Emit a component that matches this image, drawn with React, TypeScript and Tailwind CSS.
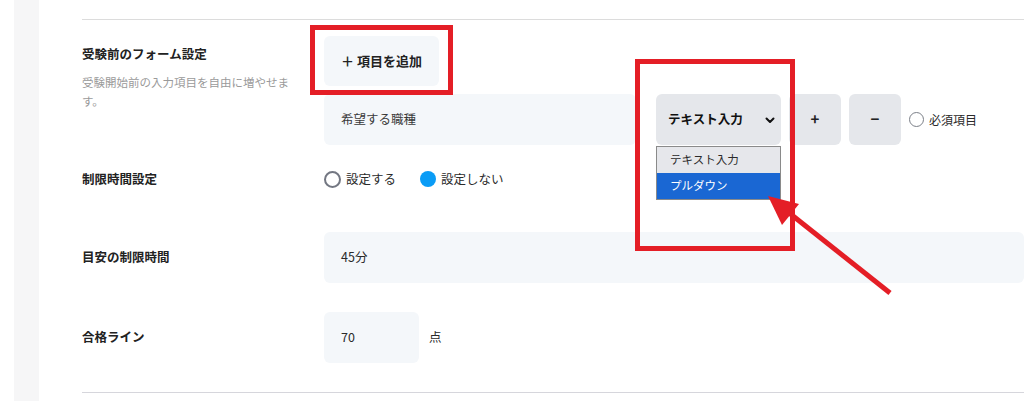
import React from "react";

export default function App() {
  const font = { fontFamily: '"Noto Sans CJK JP", "Noto Sans", sans-serif' };
  return (
    <div className="relative w-[1024px] h-[401px] bg-white overflow-hidden text-[#222]" style={font}>
      <div className="flex h-full">
        <div className="w-[14px] shrink-0" />
        <div className="w-[25px] shrink-0 bg-[#f6f6f7]" />
        <div className="flex-1 pl-[43px] pt-[19px]">
          <div className="h-px bg-[#dcdcdc]" />

          {/* Row 1 */}
          <div className="flex">
            <div className="w-[242px] shrink-0 pt-[24px]">
              <div className="text-[12.5px] font-bold leading-[19px]">受験前のフォーム設定</div>
              <div className="mt-[10px] text-[11.5px] leading-[19px] text-[#9a9a9a] w-[215px]">
                受験開始前の入力項目を自由に増やせます。
              </div>
            </div>
            <div className="pt-[16px]">
              <div className="w-[115px] h-[50px] rounded-md bg-[#f4f7fa] flex items-center justify-center text-[13px] font-bold text-[#222]">
                ＋ 項目を追加
              </div>
              <div className="mt-[8px] flex items-center">
                <div className="w-[312px] h-[51px] rounded-md bg-[#f4f7fa] flex items-center pl-[17px] text-[12.5px] text-[#3a3a3a]">
                  希望する職種
                </div>
                <div className="relative ml-[20px] w-[125px] h-[51px] rounded-md bg-[#e5e7eb] flex items-center justify-between pl-[12px] pr-[4px] text-[12.5px] font-bold text-[#111]">
                  <span>テキスト入力</span>
                  <svg width="12" height="12" viewBox="0 0 12 12" className="mr-[1px]">
                    <path d="M2.5 4.5 L6 8 L9.5 4.5" fill="none" stroke="#111" strokeWidth="2" strokeLinecap="round" strokeLinejoin="round" />
                  </svg>
                  <div className="absolute left-0 top-[52px] w-[125px] border border-[#8a8a8a] bg-white text-[11.5px] font-normal z-10">
                    <div className="h-[26px] bg-[#e6e7eb] text-[#2a2a2a] flex items-center pl-[13px]">テキスト入力</div>
                    <div className="h-[26px] bg-[#1a67d3] text-white flex items-center pl-[13px]">プルダウン</div>
                  </div>
                </div>
                <div className="ml-[8px] w-[52px] h-[51px] rounded-md bg-[#e5e7eb] flex items-center justify-center text-[15px] font-bold">+</div>
                <div className="ml-[8px] w-[52px] h-[51px] rounded-md bg-[#e5e7eb] flex items-center justify-center text-[15px] font-bold">−</div>
                <div className="ml-[8px] flex items-center">
                  <span className="w-[15px] h-[15px] rounded-full border-[1.5px] border-[#7b7f88] bg-white" />
                  <span className="ml-[5px] text-[12px] text-[#2a2a2a]">必須項目</span>
                </div>
              </div>
            </div>
          </div>

          {/* Row 2 */}
          <div className="mt-[22px] h-[24px] flex items-center">
            <div className="w-[242px] shrink-0 text-[12.5px] font-bold">制限時間設定</div>
            <div className="flex items-center text-[12.5px] text-[#2a2a2a]">
              <span className="w-[17px] h-[17px] rounded-full border-2 border-[#737782] bg-white" />
              <span className="ml-[5px]">設定する</span>
              <span className="ml-[24px] w-[16px] h-[16px] rounded-full bg-[#0a9cf6]" />
              <span className="ml-[5px]">設定しない</span>
            </div>
          </div>

          {/* Row 3 */}
          <div className="mt-[41px] flex items-center">
            <div className="w-[242px] shrink-0 text-[12.5px] font-bold">目安の制限時間</div>
            <div className="flex-1 h-[51px] rounded-md bg-[#f4f7fa] flex items-center pl-[17px] text-[12.5px] text-[#2a2a2a]">
              45分
            </div>
          </div>

          {/* Row 4 */}
          <div className="mt-[29px] flex items-center">
            <div className="w-[242px] shrink-0 text-[12.5px] font-bold">合格ライン</div>
            <div className="w-[95px] h-[51px] rounded-md bg-[#f4f7fa] flex items-center pl-[17px] text-[12.5px] text-[#2a2a2a]">
              70
            </div>
            <span className="ml-[10px] text-[12.5px] text-[#2a2a2a]">点</span>
          </div>

          <div className="mt-[29px] h-px bg-[#d6d6dc]" />
        </div>
      </div>

      {/* annotation boxes */}
      <div className="absolute left-[310px] top-[25px] w-[143px] h-[70px] border-[5px] border-[#e41e26] pointer-events-none" />
      <div className="absolute left-[635px] top-[59px] w-[160px] h-[192px] border-[5px] border-[#e41e26] pointer-events-none z-20" />
      <svg className="absolute inset-0 pointer-events-none z-30" width="1024" height="401" viewBox="0 0 1024 401">
        <line x1="890" y1="293" x2="788" y2="212" stroke="#e41e26" strokeWidth="5" />
        <polygon points="768,196 799,204 782,225" fill="#e41e26" />
      </svg>
    </div>
  );
}
